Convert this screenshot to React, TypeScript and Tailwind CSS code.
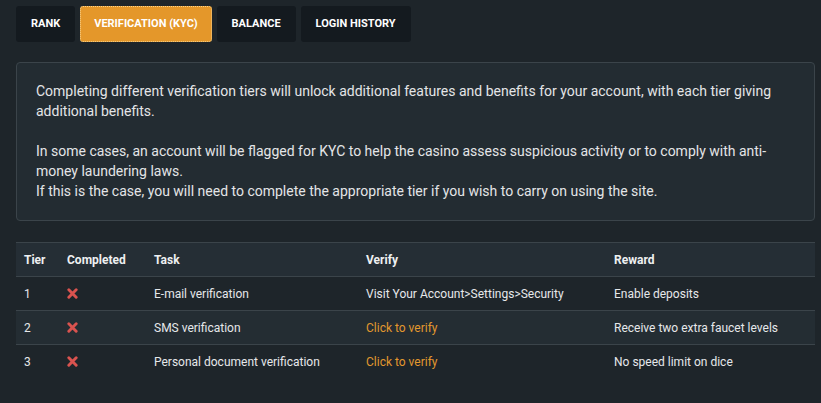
import React from "react";

const tabs = ["RANK", "VERIFICATION (KYC)", "BALANCE", "LOGIN HISTORY"];

const rows = [
  { tier: "1", task: "E-mail verification", verify: "Visit Your Account>Settings>Security", link: false, reward: "Enable deposits" },
  { tier: "2", task: "SMS verification", verify: "Click to verify", link: true, reward: "Receive two extra faucet levels" },
  { tier: "3", task: "Personal document verification", verify: "Click to verify", link: true, reward: "No speed limit on dice" },
];

function XIcon() {
  return (
    <svg width="11" height="11" viewBox="0 0 12 12" className="block">
      <path d="M2 2 L10 10 M10 2 L2 10" stroke="#d9534f" strokeWidth="3.2" strokeLinecap="round" />
    </svg>
  );
}

export default function App() {
  return (
    <div
      className="w-[821px] h-[403px] bg-[#1e252a] text-[#e6e8ea] overflow-hidden"
      style={{ fontFamily: "Roboto, 'Liberation Sans', sans-serif" }}
    >
      <div className="ml-4 w-[799px] pt-[6px]">
        <div className="flex gap-[5px]">
          {tabs.map((t, i) => (
            <div
              key={t}
              className={
                i === 1
                  ? "h-[36px] px-[13px] flex items-center rounded-[3px] bg-[#e4972a] border border-dotted border-[#f7d28e] text-white text-[11px] font-bold"
                  : "h-[36px] px-[15px] flex items-center rounded-[3px] bg-[#141a1f] text-white text-[11px] font-bold"
              }
            >
              {t}
            </div>
          ))}
        </div>

        <div className="mt-[20px] border border-[#3b444a] rounded-[4px] bg-[#232c32] pl-[19px] pr-4 pt-[18px] pb-[19px] text-[14px] leading-[20px] text-[#e3e5e7]">
          <p>
            Completing different verification tiers will unlock additional features and benefits for your account, with each tier giving additional benefits.
          </p>
          <p className="mt-[20px]">
            In some cases, an account will be flagged for KYC to help the casino assess suspicious activity or to comply with anti-money laundering laws.
            <br />
            If this is the case, you will need to complete the appropriate tier if you wish to carry on using the site.
          </p>
        </div>

        <div className="mt-[21px] text-[12px]">
          <div className="grid grid-cols-[43px_87px_212px_248px_1fr] h-[34px] items-center bg-[#252e35] border-t border-[#3b444a] font-bold text-[#eef0f1]">
            <div className="pl-2">Tier</div>
            <div className="pl-2">Completed</div>
            <div className="pl-2">Task</div>
            <div className="pl-2">Verify</div>
            <div className="pl-2">Reward</div>
          </div>
          {rows.map((r, i) => (
            <div
              key={r.tier}
              className={
                "grid grid-cols-[43px_87px_212px_248px_1fr] h-[34px] items-center border-t border-[#3b444a] " +
                (i === 1 ? "bg-[#242d33]" : "bg-[#1e252a]")
              }
            >
              <div className="pl-2">{r.tier}</div>
              <div className="pl-2"><XIcon /></div>
              <div className="pl-2">{r.task}</div>
              <div className={r.link ? "pl-2 text-[#e2982e]" : "pl-2"}>{r.verify}</div>
              <div className="pl-2">{r.reward}</div>
            </div>
          ))}
        </div>
      </div>
    </div>
  );
}
